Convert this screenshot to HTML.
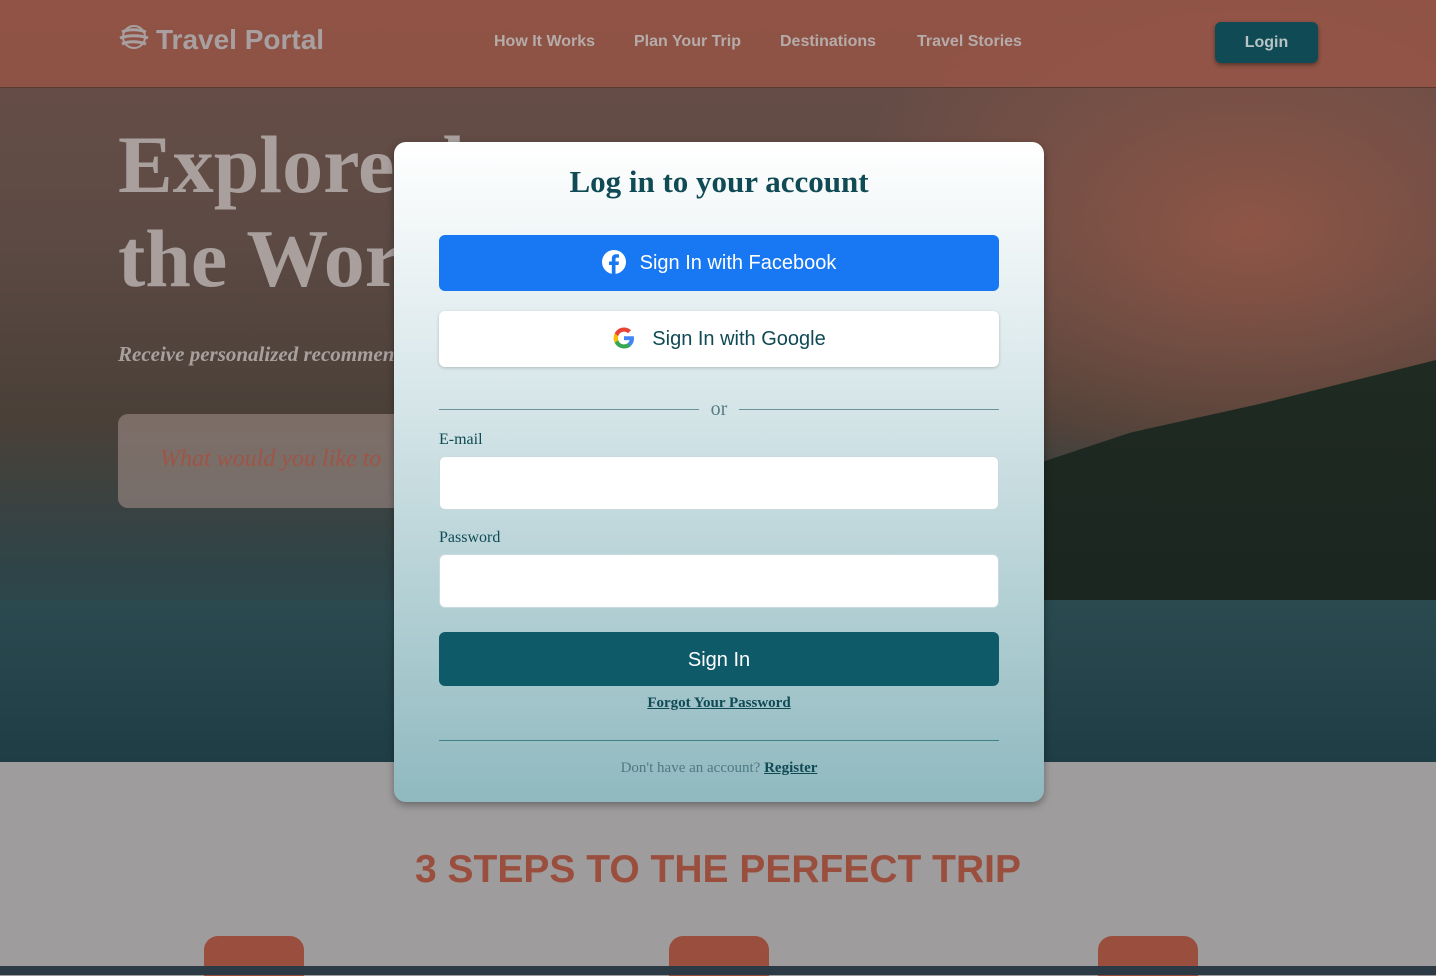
<!DOCTYPE html>
<html><head><meta charset="utf-8"><style>
body{margin:0;width:1436px;height:975px;overflow:hidden;position:relative;font-family:"Liberation Sans",sans-serif;background:#9e9c9c}
.hero{position:absolute;left:0;top:0;width:1436px;height:762px;background:
radial-gradient(ellipse 420px 260px at 1250px 230px,#8e5546,transparent),
linear-gradient(180deg,#6b4e48 0%,#5d4a44 30%,#4a4038 55%,#2e4448 75%,#2a4d55 100%)}
.forest{position:absolute;left:1000px;top:360px;width:436px;height:290px;background:linear-gradient(180deg,#1f2a22,#1a2520);clip-path:polygon(0 40%,30% 25%,60% 15%,100% 0,100% 100%,0 100%)}
.lake{position:absolute;left:0;top:600px;width:1436px;height:162px;background:linear-gradient(180deg,#2a4a50,#1f3d45)}
.nav{position:absolute;left:0;top:0;width:1436px;height:87px;background:rgba(150,85,70,.85);border-bottom:1px solid #5a3a30}
.logo{position:absolute;left:156px;top:24px;color:#a8a0a0;font-weight:bold;font-size:28px}
.nav a{position:absolute;top:33px;color:#b5acaa;font-weight:bold;font-size:16px}
.lb{position:absolute;left:1215px;top:22px;width:103px;height:41px;background:#0f4a55;border-radius:6px;color:#b8c4c6;font-weight:bold;font-size:16px;text-align:center;line-height:41px;box-shadow:0 2px 4px rgba(0,0,0,.4)}
.h1{position:absolute;left:118px;top:118px;font-family:"Liberation Serif",serif;font-weight:bold;font-size:82px;line-height:94px;color:#a9a09e}
.sub{position:absolute;left:118px;top:342px;font-family:"Liberation Serif",serif;font-style:italic;font-weight:bold;font-size:21px;color:#a9a09e}
.search{position:absolute;left:118px;top:414px;width:300px;height:94px;background:rgba(160,140,135,.6);border-radius:10px}
.search span{position:absolute;left:42px;top:32px;font-family:"Liberation Serif",serif;font-style:italic;font-size:24px;color:#a05445}
.steps{position:absolute;left:0;top:848px;width:1436px;text-align:center;font-size:39px;color:#9a4f3e;font-weight:bold}
.ic{position:absolute;top:936px;width:100px;height:40px;background:#9a4f3e;border-radius:14px 14px 0 0}
.foot{position:absolute;left:0;top:966px;width:1436px;height:9px;background:#2b3a44}
.modal{position:absolute;left:394px;top:142px;width:650px;height:660px;border-radius:12px;background:linear-gradient(180deg,#ffffff 0%,#d5e5e8 40%,#8fb9bf 100%);box-shadow:0 3px 8px rgba(0,0,0,.35)}
.modal h2{margin:0;position:absolute;top:22px;width:100%;text-align:center;font-family:"Liberation Serif",serif;font-weight:bold;font-size:31px;color:#0f4a55}
.btn{position:absolute;left:45px;width:560px;height:56px;border-radius:6px;font-size:20px;text-align:center;line-height:56px}
.fb{top:93px;background:#1877f2;color:#fff}
.gg{top:169px;background:#fff;color:#0f4a55;box-shadow:0 1px 3px rgba(0,0,0,.2)}
.or{position:absolute;left:45px;top:256px;width:560px;font-family:"Liberation Serif",serif;font-size:20px;color:#5c7d85;text-align:center}
.or:before,.or:after{content:"";position:absolute;top:11px;width:260px;height:1px;background:#6d939a}
.or:before{left:0}.or:after{right:0}
.lab{position:absolute;left:45px;font-family:"Liberation Serif",serif;font-size:16px;color:#0f4a55}
.inp{position:absolute;left:45px;width:558px;height:52px;background:#fff;border:1px solid #c9d9dc;border-radius:6px}
.si{top:490px;height:54px;background:#0f5a68;color:#fff}
.link{position:absolute;width:100%;text-align:center;font-family:"Liberation Serif",serif;font-size:15px}
</style></head><body>
<div class="hero"><div class="forest"></div><div class="lake"></div></div>
<div class="nav">
<svg style="position:absolute;left:118px;top:22px" width="32" height="30" viewBox="0 0 32 30" fill="none" stroke="#a8a0a0" stroke-width="3"><circle cx="16" cy="15" r="11" stroke-width="2"/><path d="M4 10c6-3 16-3 24 0M2 16c8-3 20-3 28 0M4 22c6-3 16-3 24 0"/></svg>
<div class="logo">Travel Portal</div>
<a style="left:494px">How It Works</a><a style="left:634px">Plan Your Trip</a><a style="left:780px">Destinations</a><a style="left:917px">Travel Stories</a>
<div class="lb">Login</div></div>
<div class="h1">Explore the<br>the World</div>
<div class="sub">Receive personalized recommendations</div>
<div class="search"><span>What would you like to</span></div>
<div class="steps">3 STEPS TO THE PERFECT TRIP</div>
<div class="ic" style="left:204px"></div><div class="ic" style="left:669px"></div><div class="ic" style="left:1098px"></div>
<div class="foot"></div>
<div class="modal">
<h2>Log in to your account</h2>
<div class="btn fb"><svg width="24" height="24" viewBox="0 0 24 24" style="vertical-align:-5px;margin-right:14px"><circle cx="12" cy="12" r="12" fill="#fff"/><path d="M13.5 24v-9h3l.5-3.5h-3.5V9.3c0-1 .3-1.7 1.8-1.7H17V4.5c-.3 0-1.4-.2-2.7-.2-2.7 0-4.5 1.6-4.5 4.6v2.6H7V15h2.8v9z" fill="#1877f2"/></svg>Sign In with Facebook</div>
<div class="btn gg"><svg width="24" height="24" viewBox="0 0 24 24" style="vertical-align:-5px;margin-right:16px"><path d="M22 12.2c0-.7-.1-1.4-.2-2H12v3.9h5.6c-.3 1.3-1 2.4-2.1 3.1v2.6h3.4c2-1.8 3.1-4.5 3.1-7.6z" fill="#4285f4"/><path d="M12 22.5c2.8 0 5.2-.9 6.9-2.5l-3.4-2.6c-.9.6-2.1 1-3.5 1-2.7 0-5-1.800-5.8-4.3H2.7v2.7C4.4 20.2 7.9 22.5 12 22.5z" fill="#34a853"/><path d="M6.2 14.1c-.4-1.3-.4-2.7 0-4V7.4H2.7c-1.5 2.9-1.5 6.4 0 9.4z" fill="#fbbc05"/><path d="M12 5.6c1.5 0 2.9.5 4 1.6l3-3C17.2 2.5 14.7 1.5 12 1.5 7.9 1.5 4.4 3.8 2.7 7.4l3.5 2.7C7 7.5 9.3 5.6 12 5.6z" fill="#ea4335"/></svg>Sign In with Google</div>
<div class="or">or</div>
<div class="lab" style="top:289px">E-mail</div>
<div class="inp" style="top:314px"></div>
<div class="lab" style="top:387px">Password</div>
<div class="inp" style="top:412px"></div>
<div class="btn si">Sign In</div>
<div class="link" style="top:553px;color:#0f4a55;text-decoration:underline;font-weight:bold">Forgot Your Password</div>
<div style="position:absolute;left:45px;top:598px;width:560px;height:1px;background:#3f7f8a"></div>
<div class="link" style="top:618px;color:#4f7a82">Don't have an account? <b style="color:#0f4a55;text-decoration:underline">Register</b></div>
</div>
</body></html>
